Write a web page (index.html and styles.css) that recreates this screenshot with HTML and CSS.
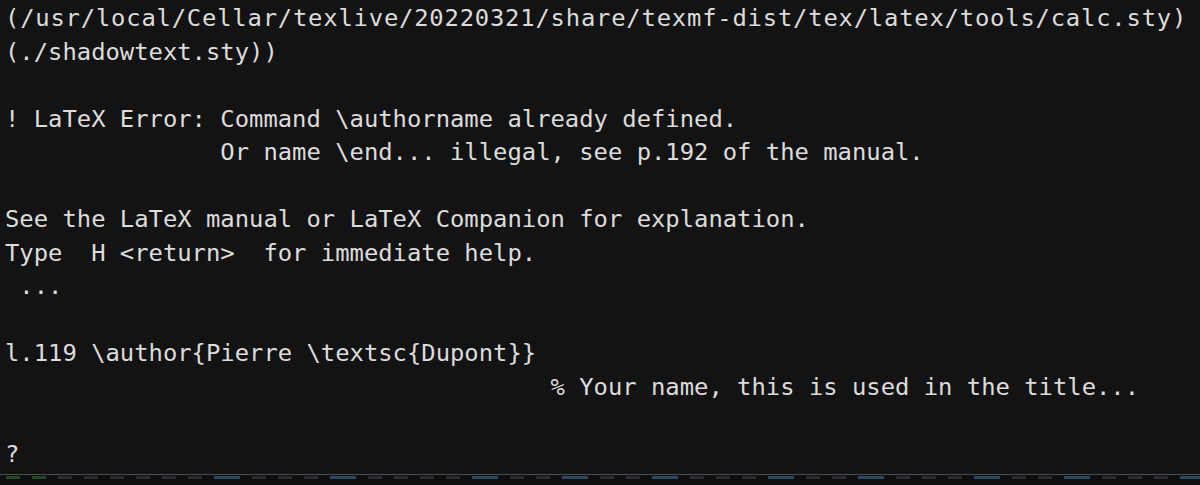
FILE: index.html
```html
<!DOCTYPE html>
<html>
<head>
<meta charset="utf-8">
<link rel="stylesheet" href="styles.css">
</head>
<body>
<div class="term">
<div class="line wide">(/usr/local/Cellar/texlive/20220321/share/texmf-dist/tex/latex/tools/calc.sty)</div>
<div class="line">(./shadowtext.sty))</div>
<div class="line"> </div>
<div class="line">! LaTeX Error: Command \authorname already defined.</div>
<div class="line">               Or name \end... illegal, see p.192 of the manual.</div>
<div class="line"> </div>
<div class="line">See the LaTeX manual or LaTeX Companion for explanation.</div>
<div class="line">Type  H &lt;return&gt;  for immediate help.</div>
<div class="line"> ...</div>
<div class="line"> </div>
<div class="line">l.119 \author{Pierre \textsc{Dupont}}</div>
<div class="line">                                      % Your name, this is used in the title...</div>
<div class="line"> </div>
<div class="line">?</div>
</div>
<div class="footer">
<span class="d g"></span><span class="d g"></span><span class="d"></span><span class="d"></span><span class="d"></span><span class="d"></span><span class="d"></span><span class="d"></span><span class="d b"></span><span class="d"></span><span class="d"></span><span class="d"></span><span class="d b"></span><span class="d"></span><span class="d"></span><span class="d"></span><span class="d"></span><span class="d b"></span><span class="d"></span><span class="d"></span><span class="d b"></span><span class="d"></span><span class="d"></span><span class="d b"></span><span class="d"></span><span class="d"></span><span class="d"></span><span class="d b"></span><span class="d"></span><span class="d"></span><span class="d b"></span><span class="d"></span><span class="d"></span><span class="d"></span><span class="d b"></span><span class="d"></span><span class="d"></span><span class="d b"></span><span class="d"></span><span class="d"></span><span class="d"></span><span class="d b"></span><span class="d"></span><span class="d"></span><span class="d"></span>
</div>
</body>
</html>
```

FILE: styles.css
```css
html, body {
  margin: 0;
  padding: 0;
  background: #131313;
  height: 485px;
  overflow: hidden;
}
.term {
  padding: 2px 0 0 5px;
  font-family: "DejaVu Sans Mono", "Liberation Mono", monospace;
  font-size: 23.85px;
  color: #dcdcdc;
}
.line {
  white-space: pre;
  height: 33.5px;
  line-height: 33.5px;
}
.line.wide {
  letter-spacing: 0.8px;
}
.footer {
  margin-top: 3px;
  border-top: 1px solid #4e4e4e;
  height: 10px;
  background: #0e0e11;
  display: flex;
  gap: 12px;
  padding: 1px 0 0 6px;
  box-sizing: border-box;
  overflow: hidden;
}
.d {
  flex: none;
  width: 14px;
  height: 3px;
  background: #2a2c31;
}
.d.g { background: #1f4a27; }
.d.b { width: 26px; background: #2c4765; }
```
